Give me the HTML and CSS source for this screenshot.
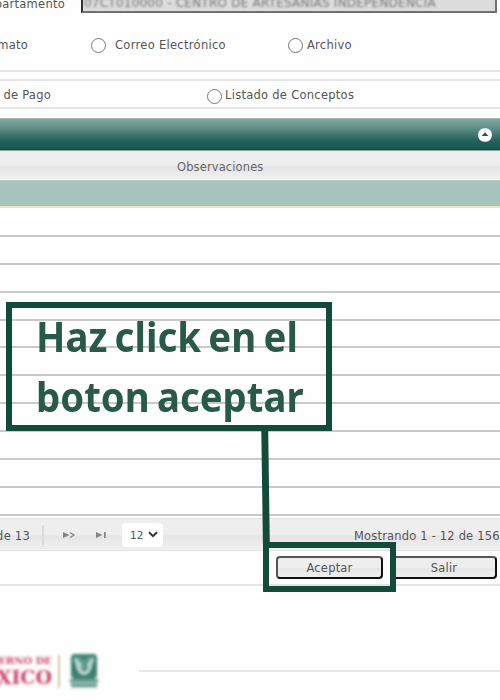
FILE: index.html
```
<!DOCTYPE html>
<html lang="es">
<head>
<meta charset="utf-8">
<title>Reportes</title>
<link rel="stylesheet" href="styles.css">
</head>
<body>
<main class="page">
  <section class="department">
    <span class="department-label">Departamento</span>
    <div class="department-field"><span>07CT010000 - CENTRO DE ARTESANIAS INDEPENDENCIA</span></div>
  </section>
  <section class="options formats">
    <span class="lead">Formato</span>
    <label class="mail"><i class="radio"></i><span>Correo Electrónico</span></label>
    <label class="file"><i class="radio"></i><span>Archivo</span></label>
  </section>
  <section class="options reports">
    <span class="lead">Recibo de Pago</span>
    <label><i class="radio"></i><span>Listado de Conceptos</span></label>
  </section>
  <section class="grid">
    <header class="grid-title">
      <svg width="14" height="14" viewBox="0 0 14 14"><rect x=".2" y=".2" width="13.6" height="13.6" rx="6" fill="#fff"/><path d="M3.6 8 7 4.3 10.4 8z" fill="#1b5c54"/></svg>
    </header>
    <div class="grid-columns"><span>Observaciones</span></div>
    <div class="row-selected"></div>
    <div class="rows">
      <div></div><div></div><div></div><div></div><div></div><div></div><div></div><div></div><div></div><div></div><div></div>
    </div>
    <footer class="pager">
      <span class="pages">de 13</span>
      <i class="divider"></i>
      <svg class="next" width="13" height="8" viewBox="0 0 13 8"><path d="M0 1 6.5 4 0 7z" fill="#858585"/><path d="m7 1.5 4 2.5-4 2.5" fill="none" stroke="#858585" stroke-width="1.3"/></svg>
      <svg class="last" width="11" height="8" viewBox="0 0 11 8"><path d="M0 1 6.5 4 0 7zM8 1h1.7v6H8z" fill="#858585"/></svg>
      <div class="size"><span>12</span><svg width="10" height="7" viewBox="0 0 10 7"><path d="m1 1.2 4 4 4-4" fill="none" stroke="#333" stroke-width="2"/></svg></div>
      <span class="showing">Mostrando 1 - 12 de 156</span>
    </footer>
  </section>
  <section class="actions">
    <button>Aceptar</button>
    <button class="exit">Salir</button>
  </section>
  <footer class="brand">
    <div class="wordmark"><span>GOBIERNO DE</span><strong>MÉXICO</strong></div>
    <i class="gold"></i>
    <svg class="emblem" width="30" height="36" viewBox="0 0 30 36"><rect x="2" y="1" width="26" height="25" rx="4" fill="#3b8273"/><path d="M5 5 11 5l4 5 5-5 5 0-1 8-4 8-5 3-5-3-4-8z" fill="#b9d3cd"/><path d="m10 3 5 4 5-4 1 4-3 4 1 5-4 3-3-3 1-5-4-4z" fill="#5b9689"/><path d="M5 10c0 9 4 13 10 14 6-1 10-5 10-14" fill="none" stroke="#317767" stroke-width="2.5"/><path d="M1 28h28M2 32.5h26" fill="none" stroke="#5b9689" stroke-width="3.5"/></svg>
    <i class="rule"></i>
  </footer>
  <div class="callout"><span class="line-one">Haz click en el</span><span class="line-two">boton aceptar</span></div>
  <svg class="connector" width="10" height="114" viewBox="0 0 10 114"><path d="M0.3 0H7.2L8.8 114H1.9z" fill="#124b39"/></svg>
  <div class="highlight"></div>
</main>
</body>
</html>
```
FILE: styles.css
```
* { box-sizing: border-box; }
body { margin: 0; background: #fefefe; font-family: "DejaVu Sans", sans-serif; font-size: 11.5px; letter-spacing: .25px; color: #555; line-height: 14px; }
.page { position: relative; width: 500px; height: 700px; overflow: hidden; }

.department { display: flex; height: 13px; }
.department-label { width: 65px; height: 14px; margin-top: -3px; display: flex; justify-content: flex-end; }
.department-field { margin-left: 16px; width: 416px; height: 13px; overflow: hidden; background: #dcdcdc; border: 2px solid #707070; border-top: 0; border-left-color: #303030; color: #777; white-space: nowrap; }
.department-field span { display: block; margin-top: -4px; padding-left: 1px; filter: blur(1.3px); font-size: 12px; letter-spacing: .23px; }

.options { display: flex; align-items: center; border-bottom: 2px solid #e4e4e4; }
.options label { display: flex; align-items: center; }
.lead { display: flex; justify-content: flex-end; white-space: nowrap; }
.radio { width: 15px; height: 15px; border: 1px solid #777; border-radius: 50%; background: #fff; }
.formats { height: 59px; }
.formats .lead { width: 28px; margin-top: 6px; }
.formats label { margin-top: 7px; }
.formats .mail { margin-left: 63px; }
.formats .mail span { margin: -1px 0 0 9px; width: 111px; white-space: nowrap; letter-spacing: .3px; }
.formats .file { margin-left: 62px; }
.formats .file span { margin: -1px 0 0 4px; }
.reports { height: 30px; margin-top: 7px; border-top: 2px solid #e4e4e4; }
.reports .lead { width: 51px; margin-top: 2px; }
.reports label { margin-left: 156px; margin-top: 2px; }
.reports .radio { margin-top: 2px; }
.reports label span { margin-left: 3px; letter-spacing: .27px; }

.grid { margin-top: 9px; }
.grid-title { height: 33px; display: flex; justify-content: flex-end; align-items: center; padding-right: 8px; border-top: 1px solid #a0b5b0; border-bottom: 1px solid #83a39d; background: linear-gradient(#85a59f, #5f8e87 30%, #226258 70%, #195b52 90%, #124f46); }
.grid-columns { height: 29px; padding: 9px 0 0 177px; color: #666; letter-spacing: .12px; background: linear-gradient(#eee 0 48%, #e5e5e5 55%, #f0f0f0 96%, #fff); }
.row-selected { height: 28px; background: #a8c2be; border-top: 1px solid #b9cdca; border-bottom: 2px solid #e6e7bd; }
.rows { height: 309px; padding-top: 1px; display: grid; grid-template-rows: repeat(11, 27.9px); }
.rows div { border-bottom: 2px solid #c9c9c9; }
.pager { height: 33px; margin-top: 1px; display: flex; align-items: center; border: 1px solid #e2e2e2; border-width: 1px 0; background: linear-gradient(#eee 0 50%, #e5e5e5 56%, #f0f0f0); }
.pages { width: 30px; padding-top: 2px; display: flex; justify-content: flex-end; white-space: nowrap; }
.divider { width: 2px; height: 20px; margin-left: 12px; background: #dadada; }
.next { margin-left: 19px; }
.last { margin-left: 20px; }
.size { margin-left: 15px; width: 41px; height: 24px; border-radius: 4px; background: #fff; display: flex; align-items: center; padding-left: 8px; gap: 4px; }
.size span { width: 14px; font-size: 10.5px; letter-spacing: 0; }
.showing { margin-left: 191px; padding-top: 2px; white-space: nowrap; letter-spacing: .18px; }
.actions { height: 35px; display: flex; align-items: flex-start; padding: 5px 0 0 276px; gap: 8px; border-bottom: 2px solid #e4e4e4; }
.actions button { width: 107px; height: 23px; padding: 0; border: 2px solid #111; border-top-color: #555; border-left-color: #555; border-radius: 4px; background: linear-gradient(#eee 0 50%, #e7e7e7 55%, #eee); font: 11.5px/14px "DejaVu Sans", sans-serif; letter-spacing: .2px; color: #555; }
.actions .exit { width: 106px; }

.brand { display: flex; height: 40px; margin-top: 67px; align-items: flex-start; }
.wordmark { width: 52px; height: 38px; margin-top: 2px; display: flex; flex-direction: column; align-items: flex-end; color: #c83e67; font-family: "DejaVu Serif", serif; font-weight: bold; white-space: nowrap; letter-spacing: 0; filter: blur(1.4px); }
.wordmark span { font-size: 10px; line-height: 12px; }
.wordmark strong { font-size: 19px; line-height: 20px; }
.gold { width: 2px; height: 33px; margin: 2px 0 0 6px; background: #d8c9ab; filter: blur(.8px); }
.emblem { margin-left: 9px; filter: blur(1.4px); }
.rule { width: 361px; height: 2px; margin: 17px 0 0 40px; background: #e7e7e7; }

.callout { position: absolute; left: 6px; top: 302px; width: 326px; height: 129px; border: 6px solid #124b39; color: #295a49; font: bold 42px/60px "Noto Sans", sans-serif; letter-spacing: 0; word-spacing: -3px; white-space: nowrap; }
.callout span { display: block; margin: 0 0 0 24px; transform-origin: left; }
.callout .line-one { margin-top: -2px; transform: scaleX(.915); }
.callout .line-two { transform: scaleX(.913); }
.connector { position: absolute; left: 261px; top: 430px; }
.highlight { position: absolute; left: 263px; top: 542px; width: 133px; height: 50px; border: 6px solid #124b39; }
```
